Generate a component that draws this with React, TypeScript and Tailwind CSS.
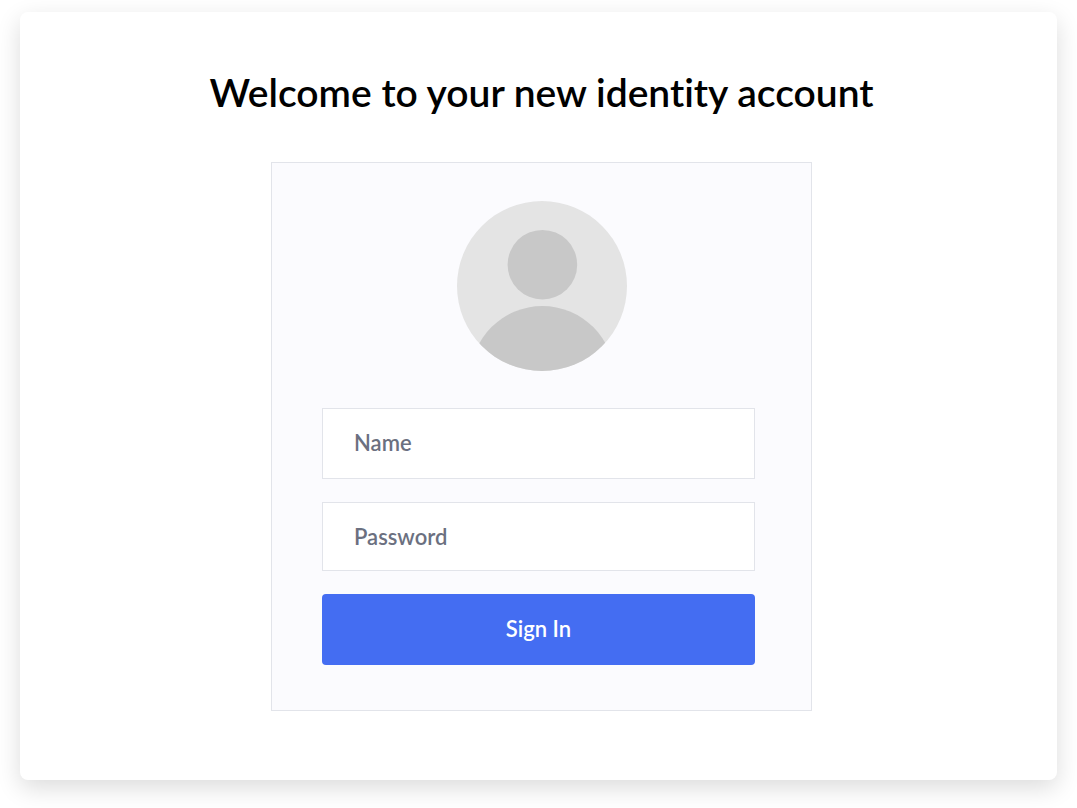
import React from "react";

function Avatar() {
  return (
    <svg viewBox="0 0 170 170" className="mx-auto size-[170px]" role="img" aria-label="Profile">
      <defs>
        <clipPath id="avatar-clip">
          <circle cx="85" cy="85" r="85" />
        </clipPath>
      </defs>
      <circle cx="85" cy="85" r="85" fill="#e4e4e4" />
      <g clipPath="url(#avatar-clip)" fill="#c8c8c8">
        <circle cx="85.4" cy="63.7" r="34.8" />
        <circle cx="85.4" cy="177" r="72" />
      </g>
    </svg>
  );
}

const fieldClass =
  "block w-full border border-[#e2e4ea] bg-white px-[31px] text-[22px] font-semibold text-[#6b7080] placeholder:text-[#6b7080] placeholder:opacity-100 focus:outline-none focus:border-[#446df2]";

export default function App() {
  return (
    <div className="min-h-screen bg-white px-5 pt-3 pb-7 font-['Lato','Open_Sans',sans-serif]">
      <main className="rounded-lg bg-white pt-14 pr-0 pb-[69px] pl-1.5 shadow-[0_8px_24px_rgba(0,0,0,0.14)]">
        <h1 className="text-center text-[39px] leading-12 font-semibold text-black [font-variant-ligatures:none]">
          Welcome to your new identity account
        </h1>

        <form
          className="mx-auto mt-[46px] max-w-[541px] border border-[#e2e4ea] bg-[#fbfbfe] px-[50px] pt-[38px] pb-[45px]"
          onSubmit={(e) => e.preventDefault()}
        >
          <Avatar />

          <div className="mt-[37px] mr-1.5 flex flex-col gap-[23px]">
            <input type="text" name="name" aria-label="Name" placeholder="Name" className={`${fieldClass} h-[71px] pb-0.5`} />
            <input type="password" name="password" aria-label="Password" placeholder="Password" className={`${fieldClass} h-[69px]`} />
            <button type="submit" className="h-[71px] rounded bg-[#446df2] pb-0.5 text-[22px] font-semibold text-white">
              Sign In
            </button>
          </div>
        </form>
      </main>
    </div>
  );
}
